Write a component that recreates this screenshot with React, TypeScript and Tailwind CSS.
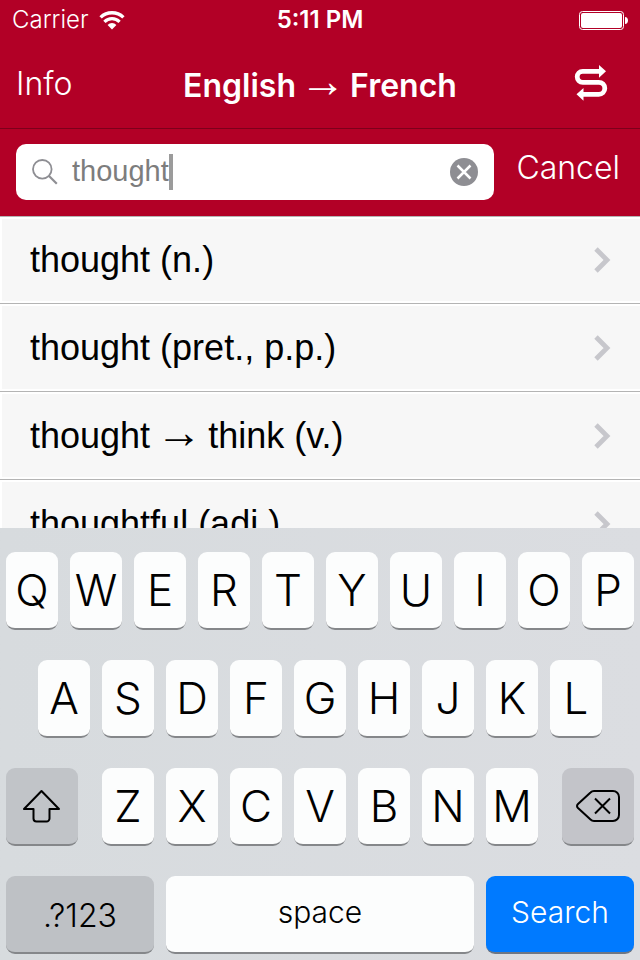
import React, { useState } from "react";

const words = [
  "thought (n.)",
  "thought (pret., p.p.)",
  "thought → think (v.)",
  "thoughtful (adj.)",
];

const WifiIcon = () => (
  <svg width="26" height="19" viewBox="0 0 26 19" fill="none" aria-hidden="true">
    <path d="M1.6 6.4a16.4 16.4 0 0 1 22.8 0" stroke="#fff" strokeWidth="3.4" />
    <path d="M5.4 10.8a10.8 10.8 0 0 1 15.2 0" stroke="#fff" strokeWidth="3.2" />
    <path d="M8.6 13.9a6.200 6.200 0 0 1 8.800 0L13 18.500z" fill="#fff" />
  </svg>
);

const BatteryIcon = () => (
  <svg width="49" height="19" viewBox="0 0 49 19" fill="none" aria-hidden="true">
    <rect x="0.5" y="0.5" width="44" height="18" rx="3" stroke="#fff" />
    <rect x="2" y="2" width="41" height="15" rx="2" fill="#fff" />
    <path d="M46 6c2 0 3 1.6 3 3.5S48 13 46 13z" fill="#fff" />
  </svg>
);

const SwapIcon = () => (
  <svg width="34" height="38" viewBox="0 0 34 38" fill="none" aria-hidden="true">
    <path
      d="M26 6.300H8.700a5.500 5.500 0 0 0 0 11h16.100a6 6 0 0 1 0 12H8.500"
      stroke="#fff"
      strokeWidth="4.800"
    />
    <path d="M25 0l7 6.300-7 6.500zM9.500 23l-7 6.300 7 6.500z" fill="#fff" />
  </svg>
);

const SearchIcon = () => (
  <svg width="26" height="26" viewBox="0 0 26 26" fill="none" stroke="#8e8e93" aria-hidden="true">
    <circle cx="10.300" cy="10.300" r="9.300" strokeWidth="1.800" />
    <path d="M16.800 16.800l8 8" strokeWidth="2.200" />
  </svg>
);

const ClearIcon = () => (
  <svg width="28" height="28" viewBox="0 0 28 28" fill="none" aria-hidden="true">
    <circle cx="14" cy="14" r="14" fill="#8e8e93" />
    <path d="M7.500 7.500l13 13M20.500 7.500l-13 13" stroke="#fff" strokeWidth="2.500" />
  </svg>
);

const Chevron = () => (
  <svg width="17" height="26" viewBox="0 0 17 26" fill="none" aria-hidden="true">
    <path d="M2 2l11 11-11 11" stroke="#c7c7cc" strokeWidth="4.800" />
  </svg>
);

const ShiftIcon = () => (
  <svg width="38" height="34" viewBox="0 0 38 34" fill="none" stroke="#000" strokeWidth="2" strokeLinejoin="round" aria-hidden="true">
    <path d="M18.500 2L1 20H10.500V29.500a3 3 0 0 0 3 3h10a3 3 0 0 0 3-3V20h9.500z" />
  </svg>
);

const DeleteIcon = () => (
  <svg width="44" height="32" viewBox="0 0 44 32" fill="none" stroke="#000" strokeWidth="2" aria-hidden="true">
    <path d="M18 1h19a6 6 0 0 1 6 6v18a6 6 0 0 1-6 6H18q-2 0-3.500-1.500L2 18q-2-2 0-4L14.500 2.500Q16 1 18 1z" />
    <path d="M19 8.500l15 15M34 8.500l-15 15" />
  </svg>
);

const Key = ({ letter }: { letter: string }) => (
  <button className="h-[78px] min-w-0 flex-1 rounded-[9px] border-b-2 border-[#85878a] bg-[#fcfdfd] font-['Inter',sans-serif] text-[44px] leading-none font-light">
    {letter}
  </button>
);

// the arrow glyph is small for its box, so it is set larger than the words
const Word = ({ text }: { text: string }) => (
  <span>
    {text.split("→").map((part, i) => (
      <React.Fragment key={i}>
        {i > 0 && (
          <span className="-mx-1 font-['Liberation_Sans',Arial,sans-serif] text-[46px] leading-none font-normal">→</span>
        )}
        {part}
      </React.Fragment>
    ))}
  </span>
);

const App = () => {
  const [query, setQuery] = useState("thought");

  return (
    <div className="flex h-screen flex-col overflow-hidden bg-[#f7f7f7] font-['Liberation_Sans',Arial,sans-serif] text-black">
      <header className="shrink-0 bg-[#b20026] text-white">
        <div className="grid h-10 grid-cols-3 items-center px-3 font-['Inter',sans-serif] text-[24px]">
          <div className="flex items-center gap-[10px] font-light">
            <span>Carrier</span>
            <WifiIcon />
          </div>
          <span className="text-center font-semibold">5:11 PM</span>
          <div className="flex justify-end">
            <BatteryIcon />
          </div>
        </div>
        <nav className="grid h-[89px] grid-cols-[1fr_auto_1fr] items-center border-b border-[#7d001b] px-4">
          <button className="justify-self-start font-['Inter',sans-serif] text-[32px] font-light">Info</button>
          <h1 className="font-['Inter',sans-serif] text-[32px] font-semibold">
            <Word text="English → French" />
          </h1>
          <button className="justify-self-end px-4" aria-label="Swap languages">
            <SwapIcon />
          </button>
        </nav>
        <div className="flex h-[87px] items-start pt-[15px] pr-5 pl-4">
          <div className="flex h-14 min-w-0 flex-1 items-center rounded-[10px] bg-white px-4">
            <SearchIcon />
            <input
              aria-label="Search"
              className="ml-[14px] field-sizing-content text-[29px] text-[#7d7d7d] outline-none"
              value={query}
              onChange={(e) => setQuery(e.target.value)}
            />
            <span className="h-9 w-1 bg-[#9b9b9b]" />
            <button className="ml-auto" aria-label="Clear" onClick={() => setQuery("")}>
              <ClearIcon />
            </button>
          </div>
          <button className="ml-[22px] font-['Inter',sans-serif] text-[32px] font-light">Cancel</button>
        </div>
      </header>

      <ul className="min-h-0 flex-1 overflow-hidden">
        {words.map((word) => (
          <li key={word} className="h-[88px] border-b border-[#b4b4b4] first:border-t">
            <a
              href="#"
              className="flex h-full items-center justify-between border-y-2 border-l-2 border-white pr-[29px] pl-7 text-[36px]"
            >
              <Word text={word} />
              <Chevron />
            </a>
          </li>
        ))}
      </ul>

      <div className="flex shrink-0 flex-col gap-[30px] bg-linear-to-r from-[#d7dbde] to-[#dbdde1] px-[6px] pt-6 pb-[6px]">
        <div className="flex gap-3">
          {"QWERTYUIOP".split("").map((l) => (
            <Key key={l} letter={l} />
          ))}
        </div>
        <div className="flex gap-3 px-8">
          {"ASDFGHJKL".split("").map((l) => (
            <Key key={l} letter={l} />
          ))}
        </div>
        <div className="flex gap-6">
          <button
            aria-label="Shift"
            className="flex h-[78px] w-[72px] items-center justify-center rounded-[9px] border-b-2 border-[#85878a] bg-[#c1c4c8]"
          >
            <ShiftIcon />
          </button>
          <div className="flex flex-1 gap-3">
            {"ZXCVBNM".split("").map((l) => (
              <Key key={l} letter={l} />
            ))}
          </div>
          <button
            aria-label="Delete"
            className="flex h-[78px] w-[72px] items-center justify-center rounded-[9px] border-b-2 border-[#85878a] bg-[#c3c4c9]"
          >
            <DeleteIcon />
          </button>
        </div>
        <div className="flex gap-3 font-['Inter',sans-serif] text-[30px] font-light">
          <button className="h-[78px] w-[148px] rounded-[9px] border-b-2 border-[#85878a] bg-[#bec1c5] pt-1 text-[32px]">
            .?123
          </button>
          <button className="h-[78px] flex-1 rounded-[9px] border-b-2 border-[#85878a] bg-[#fcfdfd] pb-1">space</button>
          <button className="h-[78px] w-[148px] rounded-[9px] border-b-2 border-[#6d7684] bg-[#007aff] pb-1 text-white">
            Search
          </button>
        </div>
      </div>
    </div>
  );
};

export default App;
